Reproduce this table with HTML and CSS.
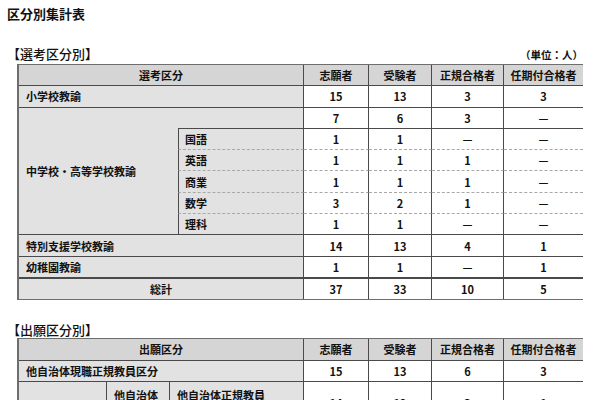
FILE: index.html
```html
<!DOCTYPE html>
<html lang="ja">
<head>
<meta charset="utf-8">
<title>区分別集計表</title>
<link rel="stylesheet" href="styles.css">
</head>
<body>
<h1 class="title">区分別集計表</h1>

<section class="sec sec1">
  <div class="sec-head">
    <h2 class="sec-title">【選考区分別】</h2>
    <span class="unit">（単位：人）</span>
  </div>
  <table class="tbl t1">
    <colgroup>
      <col class="w159"><col class="w126"><col class="w65"><col class="w63"><col class="w72"><col class="w79">
    </colgroup>
    <thead>
      <tr><th colspan="2">選考区分</th><th>志願者</th><th>受験者</th><th>正規合格者</th><th>任期付合格者</th></tr>
    </thead>
    <tbody>
      <tr><td class="lbl" colspan="2">小学校教諭</td><td>15</td><td>13</td><td>3</td><td>3</td></tr>
      <tr><td class="lbl grp" rowspan="6">中学校・高等学校教諭</td><td class="lbl blank"></td><td>7</td><td>6</td><td>3</td><td class="nil">—</td></tr>
      <tr class="dash"><td class="lbl subj">国語</td><td>1</td><td>1</td><td class="nil">—</td><td class="nil">—</td></tr>
      <tr class="dash"><td class="lbl subj">英語</td><td>1</td><td>1</td><td>1</td><td class="nil">—</td></tr>
      <tr class="dash"><td class="lbl subj">商業</td><td>1</td><td>1</td><td>1</td><td class="nil">—</td></tr>
      <tr class="dash"><td class="lbl subj">数学</td><td>3</td><td>2</td><td>1</td><td class="nil">—</td></tr>
      <tr><td class="lbl subj">理科</td><td>1</td><td>1</td><td class="nil">—</td><td class="nil">—</td></tr>
      <tr><td class="lbl" colspan="2">特別支援学校教諭</td><td>14</td><td>13</td><td>4</td><td>1</td></tr>
      <tr><td class="lbl" colspan="2">幼稚園教諭</td><td>1</td><td>1</td><td class="nil">—</td><td>1</td></tr>
      <tr class="total"><td class="lbl center" colspan="2">総計</td><td>37</td><td>33</td><td>10</td><td>5</td></tr>
    </tbody>
  </table>
</section>

<section class="sec sec2">
  <div class="sec-head">
    <h2 class="sec-title">【出願区分別】</h2>
  </div>
  <table class="tbl t2">
    <colgroup>
      <col class="w88"><col class="w63"><col class="w134"><col class="w65"><col class="w63"><col class="w72"><col class="w79">
    </colgroup>
    <thead>
      <tr><th colspan="3">出願区分</th><th>志願者</th><th>受験者</th><th>正規合格者</th><th>任期付合格者</th></tr>
    </thead>
    <tbody>
      <tr><td class="lbl" colspan="3">他自治体現職正規教員区分</td><td>15</td><td>13</td><td>6</td><td>3</td></tr>
      <tr class="two"><td class="lbl" rowspan="2"></td><td class="lbl">他自治体<br>正規教員</td><td class="lbl">他自治体正規教員<br>（現職）</td><td>14</td><td>12</td><td>3</td><td>1</td></tr>
    </tbody>
  </table>
</section>
</body>
</html>
```

FILE: styles.css
```css
html, body {
  margin: 0;
  padding: 0;
  background: #ffffff;
}

body {
  padding: 6px 0 0 7px;
  font-family: "Noto Sans CJK JP", "Noto Sans", sans-serif;
  color: #111111;
  width: 576px;
}

.title {
  margin: 0;
  font-size: 13px;
  line-height: 16px;
  font-weight: 700;
}

.sec1 {
  margin-top: 24px;
}

.sec2 {
  margin-top: 22px;
}

.sec-head {
  display: flex;
  justify-content: space-between;
  align-items: flex-end;
  height: 16px;
  margin-bottom: 2px;
}

.sec2 .sec-head {
  height: 16px;
  margin-bottom: 0;
}

.sec-title {
  margin: 0;
  font-size: 13px;
  line-height: 16px;
  font-weight: 500;
}

.unit {
  font-size: 10.5px;
  line-height: 14px;
  font-weight: 700;
}

.tbl {
  margin-left: 10px;
  width: 564px;
  table-layout: fixed;
  border-collapse: separate;
  border-spacing: 0;
  border: 1px solid #6e6e6e;
  border-left-width: 2px;
  font-size: 11px;
  font-weight: 700;
}

.w159 { width: 159px; }
.w126 { width: 126px; }
.w134 { width: 134px; }
.w88 { width: 88px; }
.w79 { width: 79px; }
.w72 { width: 72px; }
.w65 { width: 65px; }
.w63 { width: 63px; }

.tbl th,
.tbl td {
  height: 20.3px;
  padding: 0;
  line-height: 14px;
  text-align: center;
  vertical-align: middle;
  border-right: 1px solid #4a4a4a;
  border-bottom: 1px solid #4a4a4a;
  white-space: nowrap;
  overflow: hidden;
}

.tbl tr > :last-child {
  border-right: none;
}

.tbl tbody tr:last-child td {
  border-bottom: none;
}

.tbl th {
  background: #d5d5d5;
  font-weight: 700;
}

.tbl td.lbl {
  background: #e2e2e2;
  text-align: left;
  padding-left: 7px;
}

.tbl td.center {
  text-align: center;
  padding-left: 0;
}

.tbl td.nil {
  font-size: 11px;
}

.tbl td.grp {
  border-right: none;
}

.tbl td.subj {
  border-left: 1px solid #4a4a4a;
  padding-left: 6px;
}

.tbl tr.dash td {
  border-bottom: 1px dashed #a8a8a8;
}

.tbl tr.total td {
  border-top: 1px solid #4a4a4a;
}

.tbl tr.two td {
  height: 42px;
  line-height: 16px;
}
```
